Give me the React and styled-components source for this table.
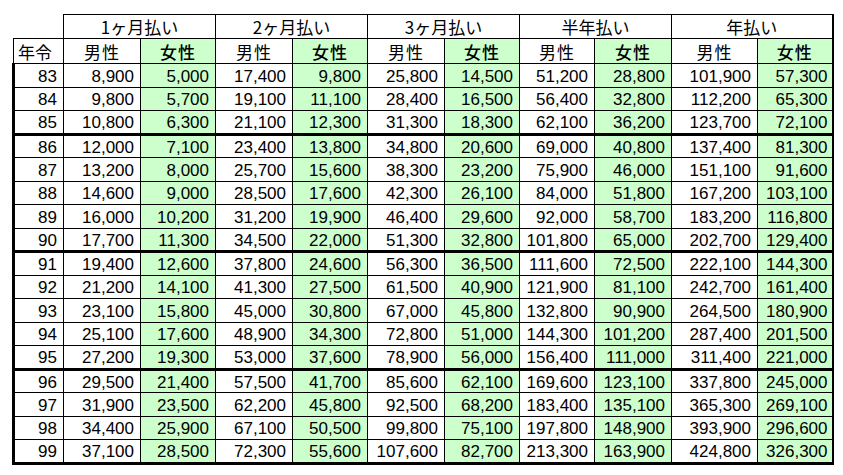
import React from "react";
import styled, { createGlobalStyle } from "styled-components";

const GlobalStyle = createGlobalStyle`
  html, body {
    margin: 0;
    padding: 0;
    background: #ffffff;
  }
  body {
    font-family: "Liberation Sans", Arial, sans-serif;
    color: #000000;
  }
`;

const Page = styled.div`
  padding: 14px 0 0 12px;
`;

const Table = styled.table`
  border-collapse: collapse;
  table-layout: fixed;
  width: 820px;
`;

const HeadCell = styled.th`
  height: ${(props) => props.$h || 23}px;
  padding: 0;
  font-family: "Noto Sans CJK JP", "Liberation Sans", sans-serif;
  font-size: 17px;
  font-weight: ${(props) => (props.$female ? 500 : 400)};
  line-height: 1;
  text-align: ${(props) => (props.$left ? "left" : "center")};
  padding-left: ${(props) => (props.$left ? "4px" : "0")};
  background: ${(props) => (props.$female ? "#ccffcc" : "#ffffff")};
  border: 1px solid #000;
  border-right-width: ${(props) => (props.$last ? 2 : 1)}px;
  letter-spacing: ${(props) => (props.$wide ? "1px" : "0")};
`;

const Blank = styled.th`
  border: none;
  padding: 0;
`;

const Cell = styled.td`
  height: 23.5px;
  padding: 2px 6px 0 0;
  box-sizing: border-box;
  font-size: 17px;
  line-height: 1;
  text-align: right;
  background: ${(props) => (props.$female ? "#ccffcc" : "#ffffff")};
  border: 1px solid #000;
  border-left-width: ${(props) => (props.$first ? 3 : 1)}px;
  border-right-width: ${(props) => (props.$last ? 2 : 1)}px;
  border-bottom-width: ${(props) => (props.$groupEnd ? 3 : 1)}px;
  padding-right: ${(props) => (props.$last ? "4px" : "6px")};
`;

const widths = [50, 77, 75, 77, 75, 77, 75, 75, 77, 86, 75];

const plans = ["1ヶ月払い", "2ヶ月払い", "3ヶ月払い", "半年払い", "年払い"];

const rows = [
  [83, "8,900", "5,000", "17,400", "9,800", "25,800", "14,500", "51,200", "28,800", "101,900", "57,300"],
  [84, "9,800", "5,700", "19,100", "11,100", "28,400", "16,500", "56,400", "32,800", "112,200", "65,300"],
  [85, "10,800", "6,300", "21,100", "12,300", "31,300", "18,300", "62,100", "36,200", "123,700", "72,100"],
  [86, "12,000", "7,100", "23,400", "13,800", "34,800", "20,600", "69,000", "40,800", "137,400", "81,300"],
  [87, "13,200", "8,000", "25,700", "15,600", "38,300", "23,200", "75,900", "46,000", "151,100", "91,600"],
  [88, "14,600", "9,000", "28,500", "17,600", "42,300", "26,100", "84,000", "51,800", "167,200", "103,100"],
  [89, "16,000", "10,200", "31,200", "19,900", "46,400", "29,600", "92,000", "58,700", "183,200", "116,800"],
  [90, "17,700", "11,300", "34,500", "22,000", "51,300", "32,800", "101,800", "65,000", "202,700", "129,400"],
  [91, "19,400", "12,600", "37,800", "24,600", "56,300", "36,500", "111,600", "72,500", "222,100", "144,300"],
  [92, "21,200", "14,100", "41,300", "27,500", "61,500", "40,900", "121,900", "81,100", "242,700", "161,400"],
  [93, "23,100", "15,800", "45,000", "30,800", "67,000", "45,800", "132,800", "90,900", "264,500", "180,900"],
  [94, "25,100", "17,600", "48,900", "34,300", "72,800", "51,000", "144,300", "101,200", "287,400", "201,500"],
  [95, "27,200", "19,300", "53,000", "37,600", "78,900", "56,000", "156,400", "111,000", "311,400", "221,000"],
  [96, "29,500", "21,400", "57,500", "41,700", "85,600", "62,100", "169,600", "123,100", "337,800", "245,000"],
  [97, "31,900", "23,500", "62,200", "45,800", "92,500", "68,200", "183,400", "135,100", "365,300", "269,100"],
  [98, "34,400", "25,900", "67,100", "50,500", "99,800", "75,100", "197,800", "148,900", "393,900", "296,600"],
  [99, "37,100", "28,500", "72,300", "55,600", "107,600", "82,700", "213,300", "163,900", "424,800", "326,300"],
];

const groupEnds = [85, 90, 95, 99];

export default function App() {
  return (
    <>
      <GlobalStyle />
      <Page>
        <Table>
          <colgroup>
            {widths.map((w, i) => (
              <col key={i} style={{ width: w }} />
            ))}
          </colgroup>
          <thead>
            <tr>
              <Blank />
              {plans.map((p, i) => (
                <HeadCell key={p} colSpan={2} $last={i === plans.length - 1}>
                  {p}
                </HeadCell>
              ))}
            </tr>
            <tr>
              <HeadCell $h={24} $left>
                年令
              </HeadCell>
              {plans.map((p, i) => (
                <React.Fragment key={p}>
                  <HeadCell $h={24} $wide>
                    男性
                  </HeadCell>
                  <HeadCell $h={24} $wide $female $last={i === plans.length - 1}>
                    女性
                  </HeadCell>
                </React.Fragment>
              ))}
            </tr>
          </thead>
          <tbody>
            {rows.map((row) => {
              const end = groupEnds.includes(row[0]);
              return (
                <tr key={row[0]}>
                  {row.map((v, i) => (
                    <Cell
                      key={i}
                      $first={i === 0}
                      $last={i === row.length - 1}
                      $female={i > 0 && i % 2 === 0}
                      $groupEnd={end}
                    >
                      {v}
                    </Cell>
                  ))}
                </tr>
              );
            })}
          </tbody>
        </Table>
      </Page>
    </>
  );
}
